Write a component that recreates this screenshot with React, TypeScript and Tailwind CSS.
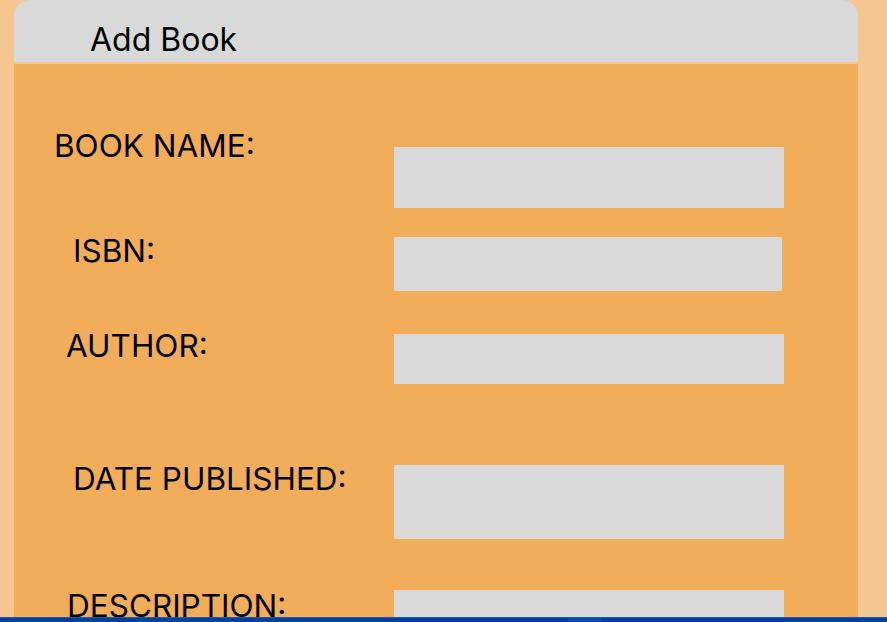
import React from "react";

type Field = {
  label: string;
  rowTop: string;
  labelPad: string;
  inputTop: string;
  inputSize: string;
};

const fields: Field[] = [
  { label: "BOOK NAME:", rowTop: "mt-0", labelPad: "pl-[40px]", inputTop: "mt-[22px]", inputSize: "w-[390px] h-[61px]" },
  { label: "ISBN:", rowTop: "mt-[22px]", labelPad: "pl-[59px]", inputTop: "mt-[7px]", inputSize: "w-[388px] h-[54px]" },
  { label: "AUTHOR:", rowTop: "mt-[34px]", labelPad: "pl-[52px]", inputTop: "mt-[9px]", inputSize: "w-[390px] h-[50px]" },
  { label: "DATE PUBLISHED:", rowTop: "mt-[74px]", labelPad: "pl-[59px]", inputTop: "mt-[7px]", inputSize: "w-[390px] h-[74px]" },
  { label: "DESCRIPTION:", rowTop: "mt-[46px]", labelPad: "pl-[53px]", inputTop: "mt-[5px]", inputSize: "w-[390px] h-[80px]" },
];

export default function App() {
  return (
    <div className="h-[622px] overflow-hidden bg-[#f5c690] px-[14px] font-['Inter',sans-serif] text-black">
      <div className="w-[844px]">
        {/* header */}
        <div className="h-[62px] rounded-t-[16px] bg-[#d9d9d9] pl-[76px] pt-[22px] text-[32px] leading-[36px]">
          Add Book
        </div>

        {/* form */}
        <div className="mt-[2px] h-[600px] bg-[#f2ad5b] pt-[61px]">
          {fields.map((f) => (
            <div key={f.label} className={`flex items-start ${f.rowTop}`}>
              <label className={`w-[380px] shrink-0 text-[31.5px] leading-[42px] ${f.labelPad}`}>
                {f.label}
              </label>
              <input
                type="text"
                className={`bg-[#d9d9d9] outline-none ${f.inputTop} ${f.inputSize}`}
              />
            </div>
          ))}
        </div>
      </div>

      {/* bottom bar */}
      <div className="fixed bottom-0 left-0 right-0 h-[5px] border-t border-[#1f5aa8] bg-[#00409a]">
        <div className="ml-[568px] h-full w-[34px] bg-[#0b4ca3]" />
      </div>
    </div>
  );
}
